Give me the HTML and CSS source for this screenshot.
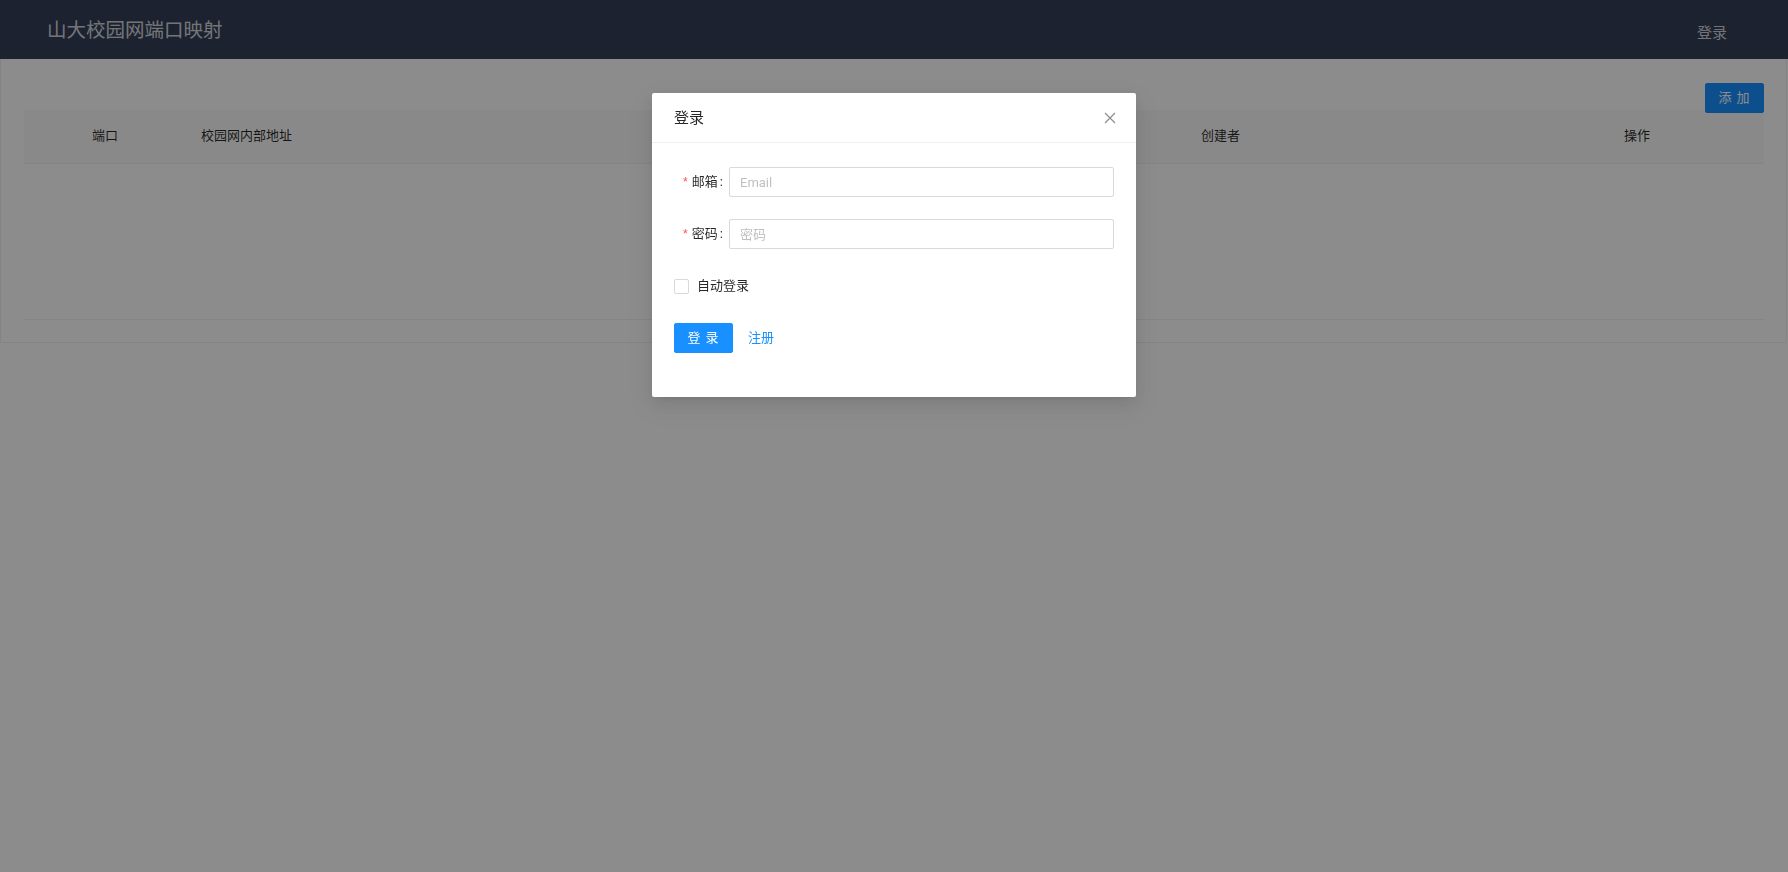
FILE: index.html
```html
<!DOCTYPE html>
<html lang="zh-CN">
<head>
    <meta charset="UTF-8">
    <meta name="viewport" content="width=device-width, initial-scale=1.0">
    <title>山大校园网端口映射</title>
    <link rel="stylesheet" href="styles.css">
</head>
<body>
    <header class="topbar">
        <div class="brand">山大校园网端口映射</div>
        <nav class="nav">
            <a class="nav-item" href="#">登录</a>
        </nav>
    </header>

    <main class="card">
        <div class="toolbar">
            <button class="btn btn-primary">添 加</button>
        </div>
        <table class="table">
            <thead>
                <tr>
                    <th class="col-port">端口</th>
                    <th class="col-addr">校园网内部地址</th>
                    <th class="col-owner">创建者</th>
                    <th class="col-ops">操作</th>
                </tr>
            </thead>
            <tbody>
                <tr class="empty-row">
                    <td colspan="4"></td>
                </tr>
            </tbody>
        </table>
    </main>

    <div class="mask"></div>
    <div class="modal-wrap">
        <div class="modal">
            <div class="modal-header">
                <div class="modal-title">登录</div>
                <button class="modal-close" aria-label="close">
                    <svg width="12" height="12" viewBox="0 0 12 12">
                        <path d="M1 1 L11 11 M11 1 L1 11" stroke="currentColor" stroke-width="1.2" fill="none"/>
                    </svg>
                </button>
            </div>
            <form class="modal-body">
                <div class="form-item">
                    <label class="form-label"><span class="req">*</span>邮箱<span class="colon">:</span></label>
                    <input class="input" type="text" placeholder="Email">
                </div>
                <div class="form-item">
                    <label class="form-label"><span class="req">*</span>密码<span class="colon">:</span></label>
                    <input class="input" type="password" placeholder="密码">
                </div>
                <div class="form-item">
                    <label class="checkbox">
                        <span class="checkbox-box"></span>
                        <span class="checkbox-text">自动登录</span>
                    </label>
                </div>
                <div class="form-item">
                    <button type="button" class="btn btn-primary">登 录</button>
                    <a class="link" href="#">注册</a>
                </div>
            </form>
        </div>
    </div>
</body>
</html>
```

FILE: styles.css
```css
* {
    box-sizing: border-box;
}

body {
    margin: 0;
    font-family: Roboto, "Noto Sans CJK SC", sans-serif;
    font-size: 13px;
    line-height: 20px;
    color: rgba(0, 0, 0, 0.85);
    background: #fff;
}

.topbar {
    height: 59px;
    background: #333e57;
    display: flex;
    align-items: center;
    justify-content: space-between;
    padding: 0 61px 0 47px;
}

.brand {
    font-size: 19.5px;
    line-height: 26px;
    color: rgba(255, 255, 255, 0.8);
    margin-top: 3px;
}

.nav-item {
    font-size: 15px;
    line-height: 22px;
    color: rgba(255, 255, 255, 0.8);
    text-decoration: none;
    display: block;
    margin-top: 7px;
}

.card {
    border: 1px solid #f0f0f0;
    border-top: none;
    padding: 24px 22px 22px 23px;
    margin-right: 1px;
}

.toolbar {
    display: flex;
    justify-content: flex-end;
    margin-bottom: -3px;
}

.btn {
    height: 30px;
    padding: 0 14px;
    border: 1px solid #d9d9d9;
    border-radius: 2px;
    font-family: inherit;
    font-size: 13px;
    line-height: 28px;
    background: #fff;
    cursor: pointer;
}

.btn-primary {
    background: #1890ff;
    border-color: #1890ff;
    color: #fff;
    width: 59px;
    padding: 0;
    letter-spacing: 1px;
}

.table {
    width: 100%;
    border-collapse: collapse;
    table-layout: fixed;
}

.table th {
    height: 53px;
    background: #fafafa;
    border-bottom: 1px solid #f0f0f0;
    font-weight: normal;
    text-align: left;
    padding: 0 15px;
    color: rgba(0, 0, 0, 0.85);
}

.table .col-port {
    width: 162px;
    text-align: center;
}

.table .col-addr {
    width: 1000px;
}

.table .col-owner {
    width: 423px;
}

.empty-row td {
    height: 156px;
    border-bottom: 1px solid #f0f0f0;
}

.mask {
    position: fixed;
    inset: 0;
    background: rgba(0, 0, 0, 0.45);
}

.modal-wrap {
    position: fixed;
    inset: 0;
    display: flex;
    justify-content: center;
    align-items: flex-start;
    padding-top: 93px;
}

.modal {
    width: 484px;
    background: #fff;
    border-radius: 2px;
    box-shadow: 0 3px 6px -4px rgba(0, 0, 0, 0.12), 0 6px 16px 0 rgba(0, 0, 0, 0.08), 0 9px 28px 8px rgba(0, 0, 0, 0.05);
}

.modal-header {
    height: 50px;
    border-bottom: 1px solid #f0f0f0;
    display: flex;
    align-items: center;
    justify-content: space-between;
    padding: 0 20px 0 22px;
}

.modal-title {
    font-size: 15px;
    line-height: 22px;
    color: rgba(0, 0, 0, 0.85);
}

.modal-close {
    width: 12px;
    height: 12px;
    padding: 0;
    border: none;
    background: transparent;
    color: rgba(0, 0, 0, 0.45);
    display: flex;
    cursor: pointer;
}

.modal-body {
    padding: 24px 22px 22px 22px;
}

.form-item {
    height: 30px;
    margin-bottom: 22px;
    display: flex;
    align-items: center;
}

.form-label {
    width: 55px;
    flex-shrink: 0;
    text-align: right;
    white-space: nowrap;
    color: rgba(0, 0, 0, 0.85);
}

.req {
    color: #ff4d4f;
    font-family: "Liberation Mono", monospace;
    font-size: 12px;
    margin-right: 3px;
}

.colon {
    margin: 0 6px 0 2px;
}

.input {
    flex: 1;
    height: 30px;
    border: 1px solid #d9d9d9;
    border-radius: 2px;
    padding: 0 10px;
    font-family: inherit;
    font-size: 13px;
    color: rgba(0, 0, 0, 0.85);
    outline: none;
}

.input::placeholder {
    color: #bfbfbf;
}

.checkbox {
    display: flex;
    align-items: center;
    cursor: pointer;
}

.checkbox-box {
    width: 15px;
    height: 15px;
    border: 1px solid #d9d9d9;
    border-radius: 2px;
    background: #fff;
}

.checkbox-text {
    padding-left: 8px;
    color: rgba(0, 0, 0, 0.85);
}

.link {
    margin-left: 15px;
    color: #1890ff;
    text-decoration: none;
}
```
